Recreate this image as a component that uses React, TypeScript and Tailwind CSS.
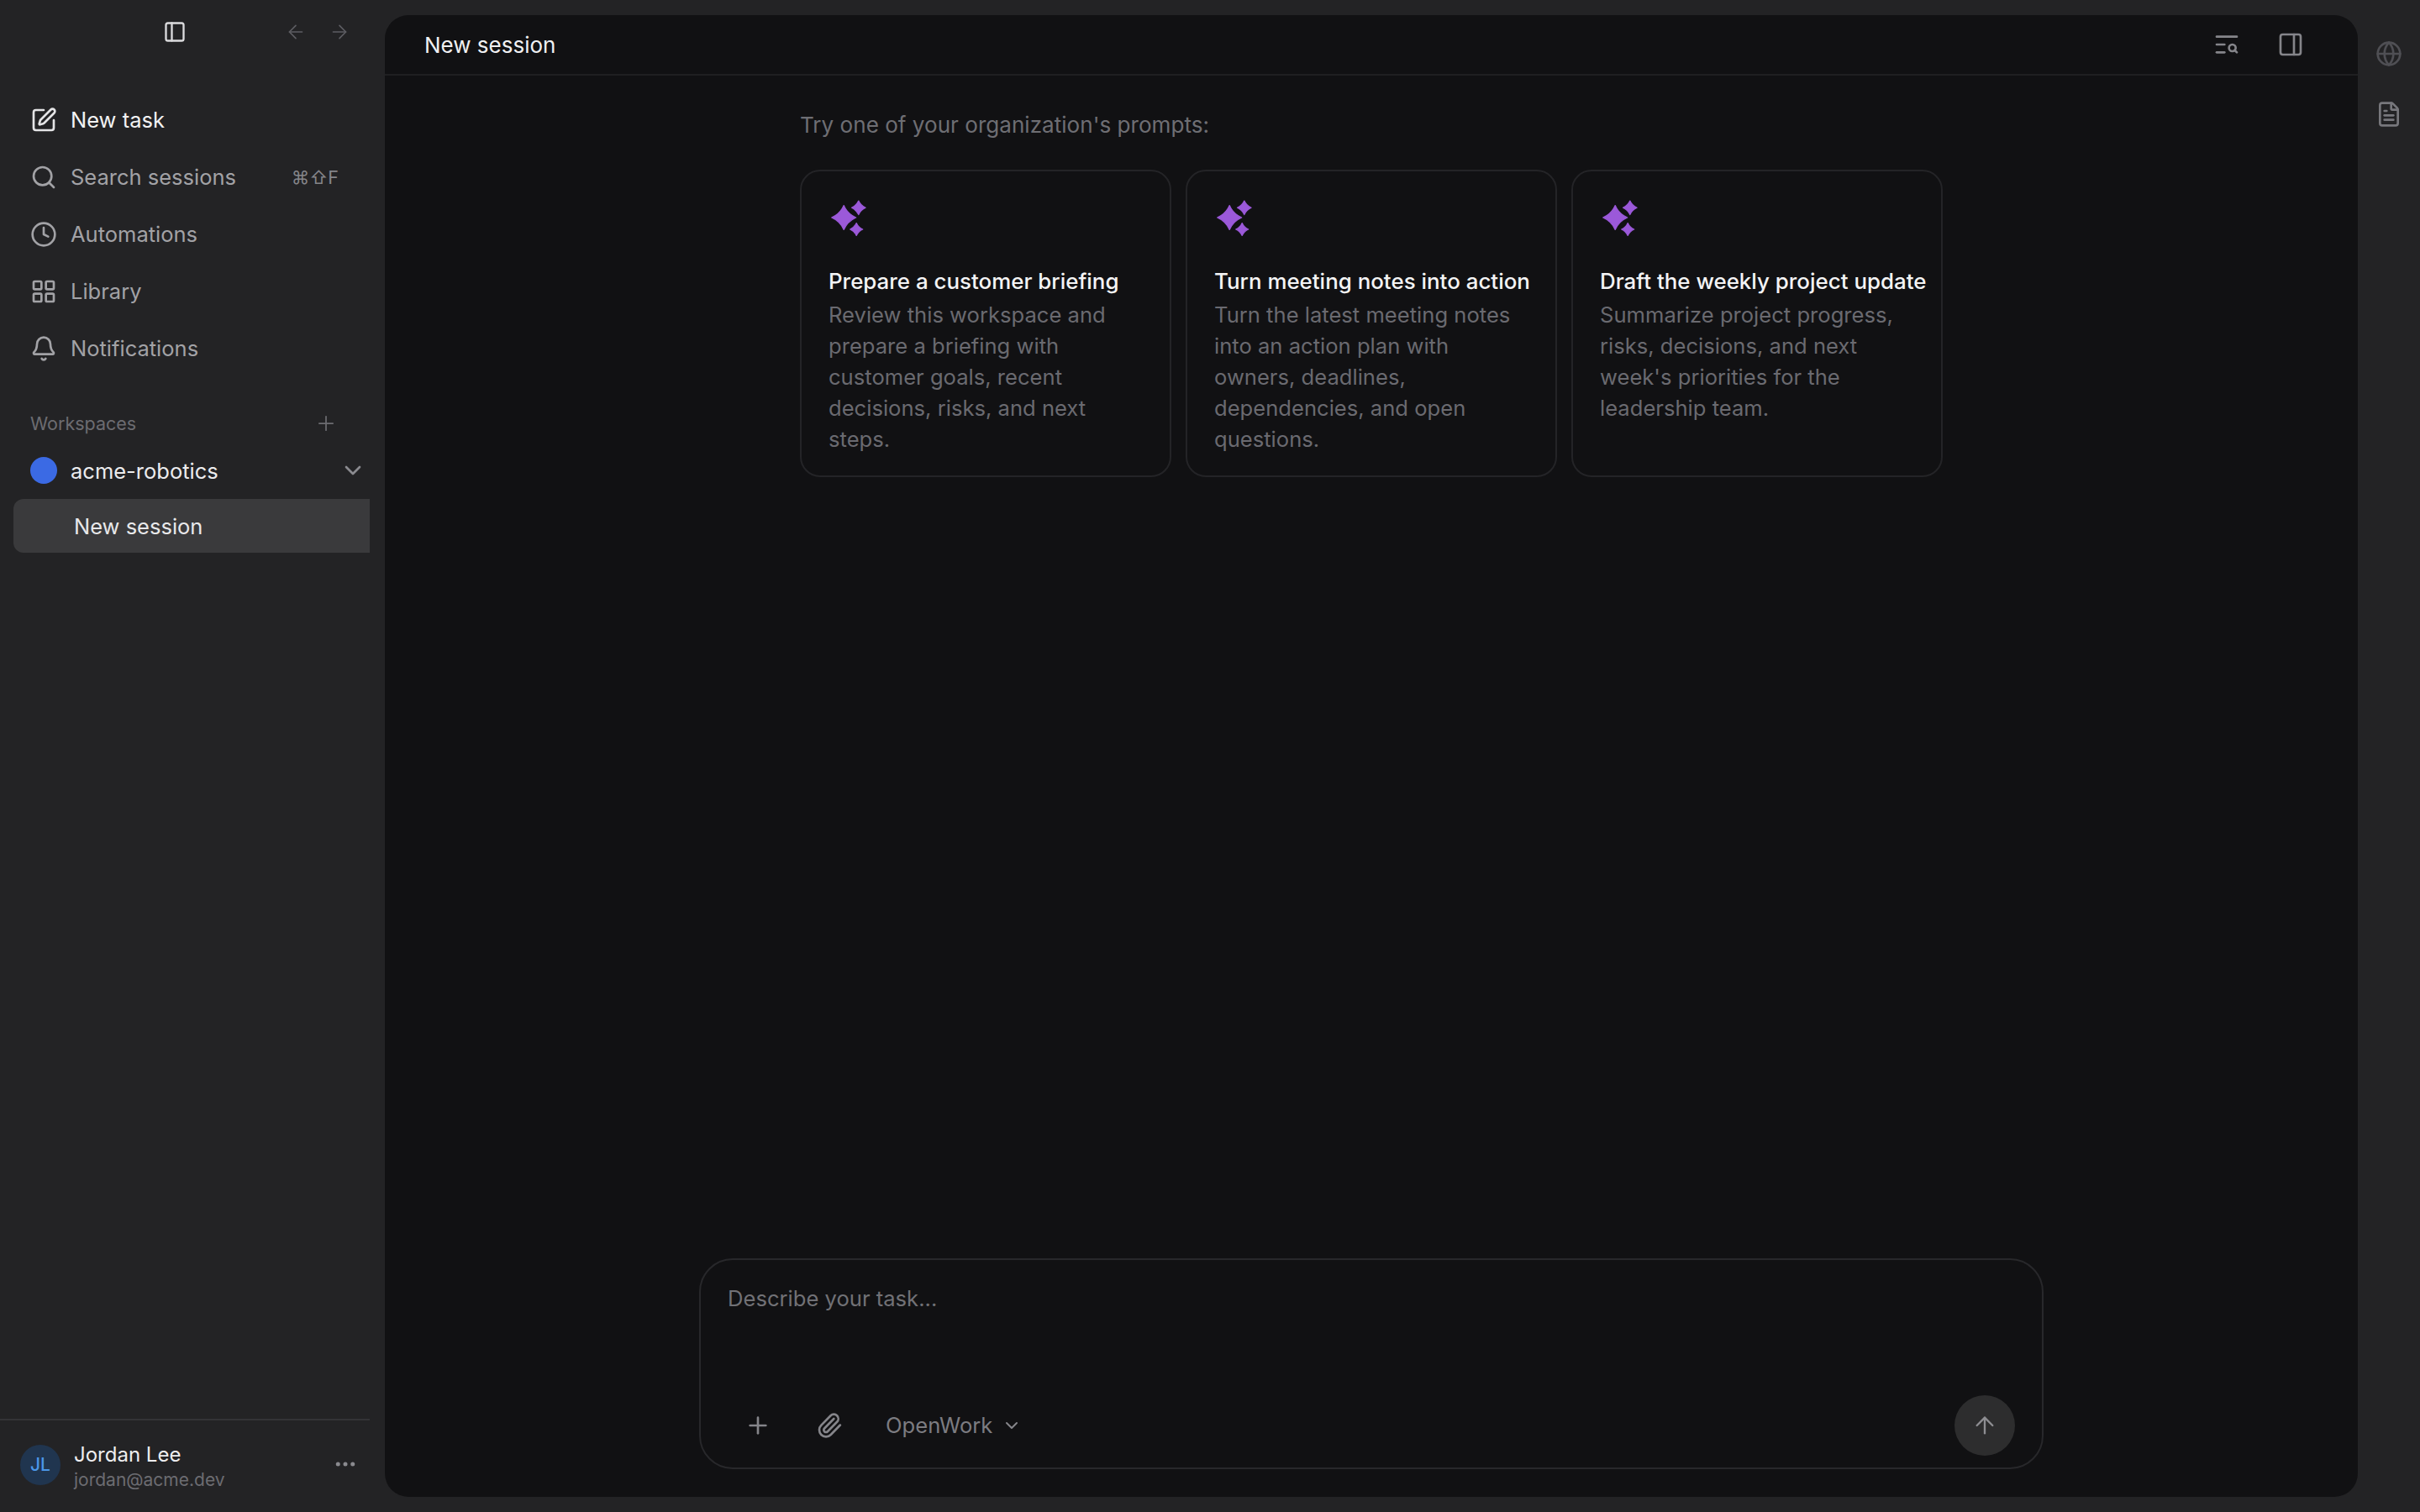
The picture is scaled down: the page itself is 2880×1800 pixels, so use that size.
import {
  ArrowLeft,
  ArrowRight,
  ArrowUp,
  Bell,
  ChevronDown,
  Clock,
  Ellipsis,
  FileText,
  Globe,
  LayoutGrid,
  PanelLeft,
  PanelRight,
  Paperclip,
  Plus,
  Search,
  SquarePen,
  TextSearch,
} from 'lucide-react';

const prompts = [
  {
    title: 'Prepare a customer briefing',
    body: 'Review this workspace and prepare a briefing with customer goals, recent decisions, risks, and next steps.',
  },
  {
    title: 'Turn meeting notes into action',
    body: 'Turn the latest meeting notes into an action plan with owners, deadlines, dependencies, and open questions.',
  },
  {
    title: 'Draft the weekly project update',
    body: "Summarize project progress, risks, decisions, and next week's priorities for the leadership team.",
  },
];

function Sparkles() {
  return (
    <svg width="46" height="44" viewBox="-2 0 46 44" fill="#9b59d9" stroke="#9b59d9" strokeWidth="1.2" strokeLinejoin="round">
      <path d="M16.2 6.5Q20.6 16.6 30.7 21Q20.6 25.4 16.2 35.5Q11.8 25.4 1.7 21Q11.8 16.6 16.2 6.5Z" />
      <path d="M33.8 1Q36.4 6.7 42.1 9.3Q36.4 11.9 33.8 17.6Q31.2 11.9 25.5 9.3Q31.2 6.7 33.8 1Z" />
      <path d="M31.2 27.5Q33.5 32.7 38.7 35Q33.5 37.3 31.2 42.5Q28.9 37.3 23.7 35Q28.9 32.7 31.2 27.5Z" />
    </svg>
  );
}

function NavItem({ icon: Icon, label, active, shortcut }: { icon: typeof Search; label: string; active?: boolean; shortcut?: string }) {
  return (
    <div className="flex h-[68px] items-center pl-[36px] pr-[37px]">
      <Icon size={32} strokeWidth={2} className={active ? 'text-[#e4e4e6]' : 'text-[#a2a2a6]'} />
      <span className={`ml-[16px] text-[25.5px] ${active ? 'text-[#f2f2f3]' : 'text-[#a2a2a6]'}`}>{label}</span>
      {shortcut && <span className="ml-auto text-[21.5px] text-[#85858a]">{shortcut}</span>}
    </div>
  );
}

function Sidebar() {
  return (
    <aside className="flex h-full w-[458px] shrink-0 flex-col pr-[18px]">
      <div className="flex h-[76px] shrink-0 items-center pl-[194px]">
        <PanelLeft size={28} strokeWidth={2} className="text-[#dcdcde]" />
        <ArrowLeft size={26} strokeWidth={1.5} className="ml-[117px] text-[#5e5e63]" />
        <ArrowRight size={26} strokeWidth={1.5} className="ml-[26px] text-[#5e5e63]" />
      </div>

      <nav className="mt-[33px] flex flex-col">
        <NavItem icon={SquarePen} label="New task" active />
        <NavItem icon={Search} label="Search sessions" shortcut="⌘⇧F" />
        <NavItem icon={Clock} label="Automations" />
        <NavItem icon={LayoutGrid} label="Library" />
        <NavItem icon={Bell} label="Notifications" />
      </nav>

      <div className="mt-[35px] flex h-[40px] items-center justify-between pl-[36px] pr-[38px]">
        <span className="text-[21.5px] text-[#6c6c71]">Workspaces</span>
        <Plus size={28} strokeWidth={1.5} className="text-[#6c6c71]" />
      </div>

      <div className="mt-[6px] flex h-[60px] items-center pl-[36px] pr-[4px]">
        <span className="h-[32px] w-[32px] rounded-full bg-[#3b6ae4]" />
        <span className="ml-[16px] pt-[2px] text-[25.5px] text-[#ececee]">acme-robotics</span>
        <ChevronDown size={32} strokeWidth={2} className="ml-auto text-[#8a8a8f]" />
      </div>

      <div className="ml-[16px] mt-[4px] flex h-[64px] items-center rounded-l-[12px] bg-[#3a3a3c] pl-[72px]">
        <span className="pt-[2px] text-[25.5px] text-[#e8e8ea]">New session</span>
      </div>

      <div className="mt-auto h-[111px] border-t-2 border-[#333336]">
        <div className="flex items-center pl-[24px] pr-[14px] pt-[20px]">
          <div className="flex h-[48px] w-[48px] items-center justify-center rounded-full bg-[#20354f] text-[21px] font-medium text-[#4b97e8]">
            JL
          </div>
          <div className="ml-[16px] mt-[5px] flex flex-col">
            <span className="text-[24px] leading-[31px] text-[#eeeef0]">Jordan Lee</span>
            <span className="text-[21px] leading-[30px] text-[#6c6c71]">jordan@acme.dev</span>
          </div>
          <Ellipsis size={30} strokeWidth={2} className="mb-[3px] ml-auto text-[#8a8a8f]" />
        </div>
      </div>
    </aside>
  );
}

function PromptCard({ title, body }: { title: string; body: string }) {
  return (
    <div className="h-[366px] rounded-[24px] border-2 border-[#242427] px-[32px] pt-[34px]">
      <Sparkles />
      <div className="mt-[35px] whitespace-nowrap text-[25.9px] font-[450] leading-[36px] text-[#f4f4f5]">{title}</div>
      <div className="mt-[3px] text-[25.6px] leading-[37px] text-[#6a6a70]">{body}</div>
    </div>
  );
}

function Composer() {
  return (
    <div className="mx-auto mb-[33px] flex h-[251px] w-[1600px] shrink-0 flex-col rounded-[40px] border-2 border-[#28282b] pb-[14px] pl-[32px] pr-[32px] pt-[28px]">
      <textarea
        readOnly
        rows={1}
        placeholder="Describe your task..."
        className="h-[40px] w-full resize-none bg-transparent text-[25.6px] leading-[36px] outline-none placeholder:text-[#717176]"
      />
      <div className="mt-auto flex items-center">
        <Plus size={32} strokeWidth={2} className="ml-[20px] text-[#85858a]" />
        <Paperclip size={32} strokeWidth={2} className="ml-[53px] text-[#85858a]" />
        <span className="ml-[51px] text-[25.6px] text-[#7c7c81]">OpenWork</span>
        <ChevronDown size={24} strokeWidth={2} className="ml-[11px] text-[#85858a]" />
        <button className="ml-auto flex h-[72px] w-[72px] items-center justify-center rounded-full bg-[#2d2d2e]">
          <ArrowUp size={32} strokeWidth={1.75} className="text-[#8e8e92]" />
        </button>
      </div>
    </div>
  );
}

export default function App() {
  return (
    <div className="flex h-screen w-full overflow-hidden bg-[#232325] font-[Inter,sans-serif] antialiased [font-optical-sizing:none]">
      <Sidebar />

      <div className="flex h-full flex-1 flex-col py-[18px]">
        <main className="flex h-full flex-col rounded-[28px] bg-[#111113]">
          <header className="flex h-[72px] shrink-0 items-center border-b-2 border-[#1f1f21] pl-[47px] pr-[64px]">
            <span className="text-[26px] text-[#f0f0f2]">New session</span>
            <TextSearch size={32} strokeWidth={2} className="ml-auto text-[#85858a]" />
            <PanelRight size={32} strokeWidth={2} className="ml-[44px] text-[#85858a]" />
          </header>

          <section className="mx-auto w-[1360px] flex-1 pt-[40px]">
            <p className="text-[26.1px] leading-[38px] text-[#6e6e73]">Try one of your organization's prompts:</p>
            <div className="mt-[34px] grid grid-cols-3 gap-[17px]">
              {prompts.map((p) => (
                <PromptCard key={p.title} title={p.title} body={p.body} />
              ))}
            </div>
          </section>

          <Composer />
        </main>
      </div>

      <div className="flex h-full w-[74px] shrink-0 flex-col items-center gap-[40px] pt-[48px]">
        <Globe size={32} strokeWidth={2} className="text-[#4f4f54]" />
        <FileText size={32} strokeWidth={2} className="text-[#77777c]" />
      </div>
    </div>
  );
}
